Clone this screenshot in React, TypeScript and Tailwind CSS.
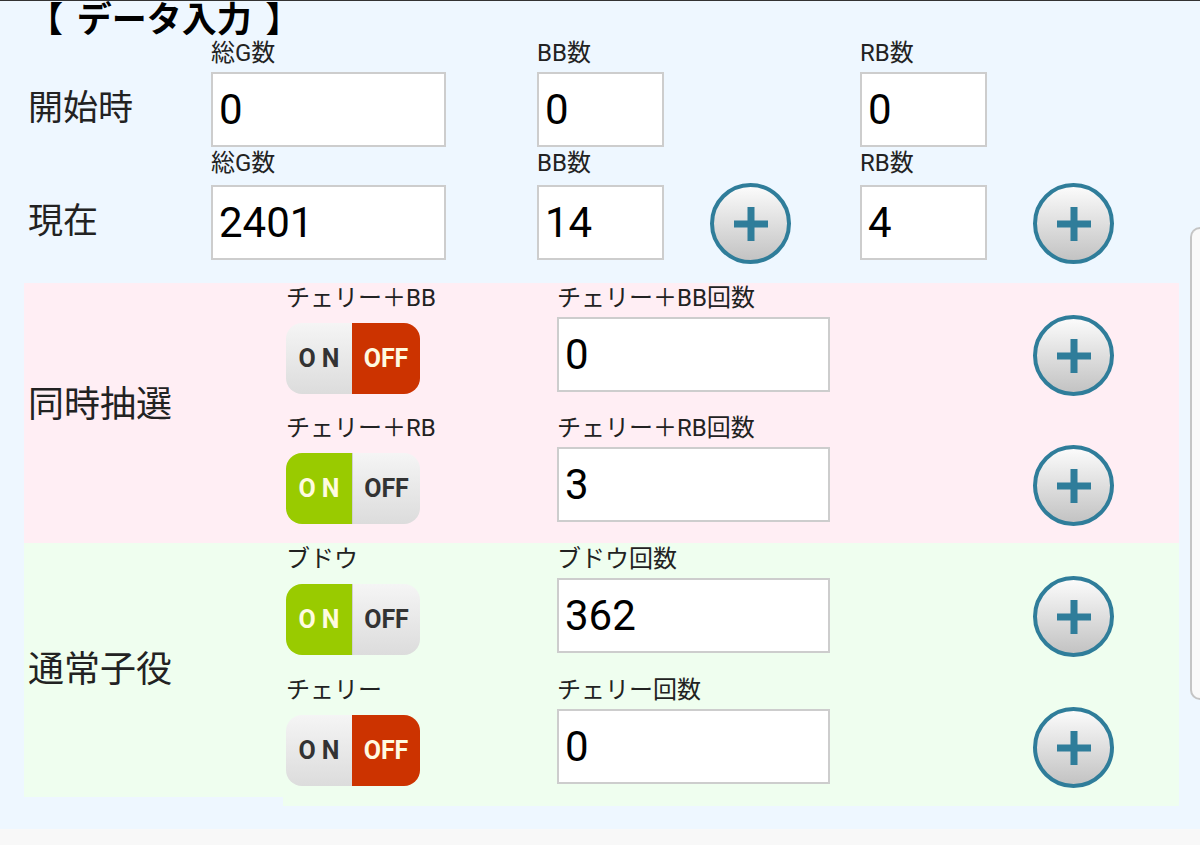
import { ReactNode } from 'react';

const font = "font-['Roboto','Noto_Sans_CJK_JP',sans-serif]";

function PlusButton() {
  return (
    <button
      type="button"
      className="flex h-[81px] w-[81px] items-center justify-center rounded-full border-[4px] border-[#2f7d9a] bg-gradient-to-b from-[#fbfbfb] to-[#c3c3c3]"
      aria-label="plus"
    >
      <svg width="34" height="34" viewBox="0 0 34 34">
        <rect x="0" y="13.5" width="34" height="7" fill="#2f7d9a" />
        <rect x="13.5" y="0" width="7" height="34" fill="#2f7d9a" />
      </svg>
    </button>
  );
}

function NumBox({ value, width, height = 'h-[75px]' }: { value: string; width: string; height?: string }) {
  return (
    <div className={`${width} ${height} flex items-center border-2 border-[#cdcdcd] bg-white pl-[6px] text-[42px] text-black`}>
      {value}
    </div>
  );
}

function Caption({ children }: { children: ReactNode }) {
  return <div className="h-[30px] whitespace-nowrap text-[24px] leading-[30px] text-[#222]">{children}</div>;
}

function Toggle({ on }: { on: boolean }) {
  return (
    <div className="flex h-[71px] w-[134px] overflow-hidden rounded-[16px] text-[25px] font-bold">
      {on ? (
        <div className="flex w-[66px] items-center justify-center bg-[#99cb00] pl-[6px] tracking-[6px] text-[#fffbe0]">ON</div>
      ) : (
        <div className="flex w-[66px] items-center justify-center bg-gradient-to-b from-[#f5f5f5] to-[#dcdcdc] pl-[6px] tracking-[6px] text-[#333]">ON</div>
      )}
      {on ? (
        <div className="flex w-[68px] items-center justify-center border-l border-[#d0d0d0] bg-gradient-to-b from-[#f5f5f5] to-[#dcdcdc] text-[#333]">OFF</div>
      ) : (
        <div className="flex w-[68px] items-center justify-center bg-[#cc3300] text-[#fffbe0]">OFF</div>
      )}
    </div>
  );
}

function FlagRow({ name, on, count, rowHeight }: { name: string; on: boolean; count: string; rowHeight: string }) {
  return (
    <div className={`flex ${rowHeight}`}>
      <div className="w-[274px] pl-[3px]">
        <Caption>{name}</Caption>
        <div className="mt-[10px]">
          <Toggle on={on} />
        </div>
      </div>
      <div className="w-[273px]">
        <Caption>{name}回数</Caption>
        <div className="mt-[4px]">
          <NumBox value={count} width="w-[273px]" height="h-[75px]" />
        </div>
      </div>
      <div className="ml-[203px] pt-[32px]">
        <PlusButton />
      </div>
    </div>
  );
}

export default function App() {
  return (
    <div className={`relative h-[845px] w-[1200px] overflow-hidden bg-[#eef7ff] ${font}`}>
      <div className="h-px bg-[#333]" />

      {/* title */}
      <div className="h-[37px] pl-[28px] text-[35px] font-bold leading-[39px] text-black [word-spacing:5px]">【 データ入力 】</div>

      {/* 開始時 / 現在 */}
      <div className="pl-[28px]">
        <div className="flex items-start">
          <div className="mt-[34px] flex h-[75px] w-[183px] items-center text-[35px] text-[#222]">開始時</div>
          <div className="w-[326px]">
            <Caption>総G数</Caption>
            <div className="mt-[4px]">
              <NumBox value="0" width="w-[235px]" />
            </div>
          </div>
          <div className="w-[323px]">
            <Caption>BB数</Caption>
            <div className="mt-[4px]">
              <NumBox value="0" width="w-[127px]" />
            </div>
          </div>
          <div>
            <Caption>RB数</Caption>
            <div className="mt-[4px]">
              <NumBox value="0" width="w-[127px]" />
            </div>
          </div>
        </div>

        <div className="mt-px flex h-[112px] items-start">
          <div className="mt-[37px] flex h-[75px] w-[183px] items-center text-[35px] text-[#222]">現在</div>
          <div className="w-[326px]">
            <Caption>総G数</Caption>
            <div className="mt-[7px]">
              <NumBox value="2401" width="w-[235px]" />
            </div>
          </div>
          <div className="w-[173px]">
            <Caption>BB数</Caption>
            <div className="mt-[7px]">
              <NumBox value="14" width="w-[127px]" />
            </div>
          </div>
          <div className="w-[150px] pt-[35px]">
            <PlusButton />
          </div>
          <div className="w-[173px]">
            <Caption>RB数</Caption>
            <div className="mt-[7px]">
              <NumBox value="4" width="w-[127px]" />
            </div>
          </div>
          <div className="pt-[35px]">
            <PlusButton />
          </div>
        </div>
      </div>

      {/* 同時抽選 */}
      <div className="ml-[24px] mt-[23px] flex w-[1155px] bg-[#ffeef4]">
        <div className="flex w-[259px] items-center pb-[16px] pl-[4px] text-[36px] text-[#222]">同時抽選</div>
        <div>
          <FlagRow name="チェリー＋BB" on={false} count="0" rowHeight="h-[130px]" />
          <FlagRow name="チェリー＋RB" on={true} count="3" rowHeight="h-[130px]" />
        </div>
      </div>

      {/* 通常子役 */}
      <div className="ml-[24px] flex w-[1155px] items-start">
        <div className="flex h-[254px] w-[259px] items-center bg-[#effeef] pl-[4px] text-[36px] text-[#222]">通常子役</div>
        <div className="flex-1 bg-[#effeef] pt-px">
          <FlagRow name="ブドウ" on={true} count="362" rowHeight="h-[131px]" />
          <FlagRow name="チェリー" on={false} count="0" rowHeight="h-[131px]" />
        </div>
      </div>

      {/* bottom strip */}
      <div className="absolute bottom-0 left-0 h-[16px] w-full bg-[#f8f8f8]" />

      {/* edge handle */}
      <div className="absolute right-0 top-[227px] h-[473px] w-[10px] rounded-l-[12px] border-y-2 border-l-2 border-[#c4c4c4] bg-[#f9f9f9]" />
    </div>
  );
}
